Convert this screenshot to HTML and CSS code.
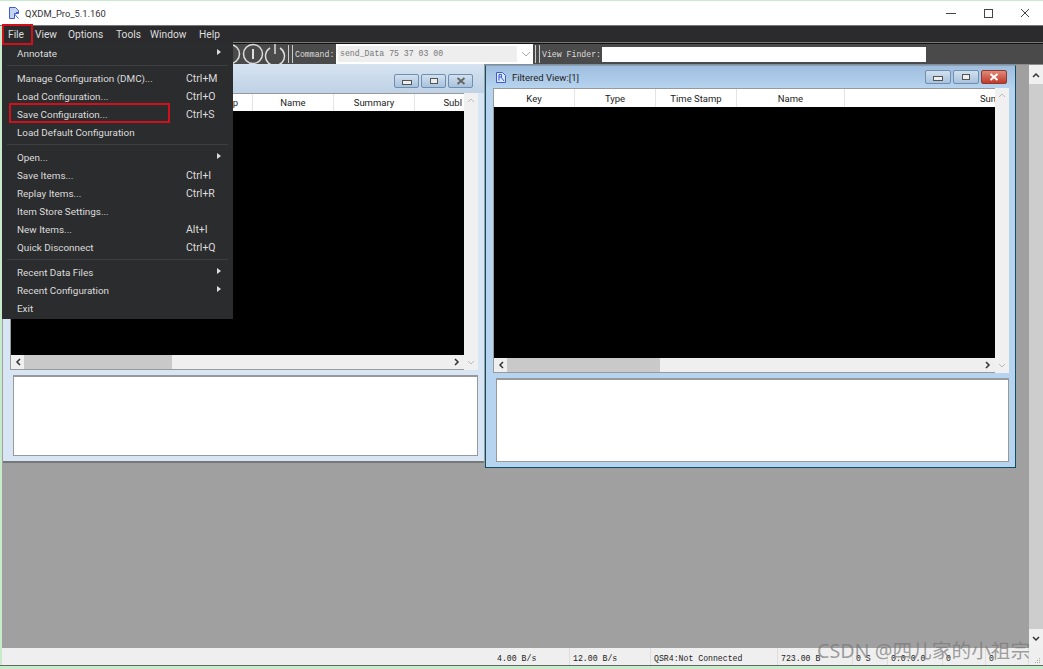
FILE: index.html
```html
<!DOCTYPE html>
<html lang="en">
<head>
  <meta charset="UTF-8" />
  <title>QXDM_Pro_5.1.160</title>
  <link rel="stylesheet" href="styles.css">
</head>
<body>
  <div class="app">
    <div class="titlebar">
      <svg class="app-icon" viewBox="0 0 12 12" width="12" height="12"><path d="M1.5 .5h6l3 3v3H6.5v5h-5z" fill="#c6d4f4" stroke="#3f5fc8"/><path d="M6.5 7l4 4.5M8 5.5h2.5" stroke="#3f5fc8" fill="none"/></svg>
      <span class="app-name">QXDM_Pro_5.1.160</span>
      <div class="caption">
        <svg viewBox="0 0 10 10" width="10" height="10"><path d="M0 5.5h10" stroke="#444"/></svg>
        <svg viewBox="0 0 10 10" width="10" height="10"><rect x="1.5" y="1.5" width="8" height="8" fill="none" stroke="#444"/></svg>
        <svg viewBox="0 0 10 10" width="10" height="10"><path d="M1 1l8 8M9 1l-8 8" stroke="#444"/></svg>
      </div>
    </div>

    <nav class="menubar">
      <a>File</a><a>View</a><a>Options</a><a>Tools</a><a>Window</a><a>Help</a>
    </nav>

    <div class="toolbar">
      <svg class="power" viewBox="0 0 66 22" width="66" height="22">
        <circle cx="10" cy="11" r="9.5" fill="none" stroke="#ddd" stroke-width="1.5"/>
        <circle cx="33" cy="11" r="9.5" fill="none" stroke="#ddd" stroke-width="1.5"/>
        <path d="M33 6v10" stroke="#ddd" stroke-width="2"/>
        <path d="M50 5a9.5 9.5 0 1 0 10 0" fill="none" stroke="#ddd" stroke-width="1.5"/>
        <path d="M55 1v10" stroke="#ddd" stroke-width="1.5"/>
      </svg>
      <i class="grip"></i>
      <span class="tool-label">Command:</span>
      <div class="combo">
        <span class="combo-text">send_Data 75 37 03 00</span>
        <svg viewBox="0 0 10 6" width="10" height="6"><path d="M1 1l4 4 4-4" fill="none" stroke="#aaa"/></svg>
      </div>
      <i class="grip"></i>
      <span class="tool-label finder">View Finder:</span>
      <div class="finder-input"></div>
    </div>

    <main class="desktop">
      <section class="win win-back">
        <header class="win-title">
          <div class="win-btns">
            <button><i class="glyph-min"></i></button>
            <button><i class="glyph-max"></i></button>
            <button><svg viewBox="0 0 10 8" width="10" height="8"><path d="M1.5 1l7 6M8.5 1l-7 6" stroke="#666" stroke-width="2"/></svg></button>
          </div>
        </header>
        <div class="list">
          <div class="list-main">
            <div class="list-head">
              <span class="col col-a">Time Stamp</span>
              <span class="col col-b">Name</span>
              <span class="col col-b">Summary</span>
              <span class="col col-clip">Subl</span>
            </div>
            <div class="list-body"></div>
            <div class="hscroll">
              <svg viewBox="0 0 6 8" width="6" height="8"><path d="M5 1L2 4l3 3" fill="none" stroke="#333" stroke-width="1.5"/></svg>
              <div class="track"><div class="thumb thumb-back"></div></div>
              <svg viewBox="0 0 6 8" width="6" height="8"><path d="M1 1l3 3-3 3" fill="none" stroke="#333" stroke-width="1.5"/></svg>
            </div>
          </div>
          <div class="vscroll">
            <svg viewBox="0 0 8 6" width="8" height="6"><path d="M1 5l3-3 3 3" fill="none" stroke="#bbb"/></svg>
            <svg viewBox="0 0 8 6" width="8" height="6"><path d="M1 1l3 3 3-3" fill="none" stroke="#bbb"/></svg>
          </div>
        </div>
        <div class="detail"></div>
      </section>

      <section class="win win-front">
        <header class="win-title">
          <svg class="win-icon" viewBox="0 0 12 13" width="12" height="13"><path d="M1.5 1.5h6l3 3v7h-9z" fill="#dbe5fb" stroke="#3f5fc8"/><path d="M4 3.5v6M4 3.5h2.5v2.5H4M6 6l3 4" fill="none" stroke="#3f5fc8"/></svg>
          <span class="win-name">Filtered View:[1]</span>
          <div class="win-btns">
            <button><i class="glyph-min"></i></button>
            <button><i class="glyph-max"></i></button>
            <button class="btn-close"><svg viewBox="0 0 10 8" width="10" height="8"><path d="M1.5 1l7 6M8.5 1l-7 6" stroke="#fff" stroke-width="2"/></svg></button>
          </div>
        </header>
        <div class="list">
          <div class="list-main">
            <div class="list-head">
              <span class="col col-b">Key</span>
              <span class="col col-b">Type</span>
              <span class="col col-b">Time Stamp</span>
              <span class="col col-name">Name</span>
              <span class="col col-sum">Sun</span>
            </div>
            <div class="list-body"></div>
            <div class="hscroll">
              <svg viewBox="0 0 6 8" width="6" height="8"><path d="M5 1L2 4l3 3" fill="none" stroke="#333" stroke-width="1.5"/></svg>
              <div class="track"><div class="thumb thumb-front"></div></div>
              <svg viewBox="0 0 6 8" width="6" height="8"><path d="M1 1l3 3-3 3" fill="none" stroke="#333" stroke-width="1.5"/></svg>
            </div>
          </div>
          <div class="vscroll">
            <svg viewBox="0 0 8 6" width="8" height="6"><path d="M1 5l3-3 3 3" fill="none" stroke="#bbb"/></svg>
            <svg viewBox="0 0 8 6" width="8" height="6"><path d="M1 1l3 3 3-3" fill="none" stroke="#bbb"/></svg>
          </div>
        </div>
        <div class="detail"></div>
      </section>

      <div class="desk-scroll">
        <div class="desk-arrow"><svg viewBox="0 0 8 6" width="8" height="6"><path d="M1 5l3-3 3 3" fill="none" stroke="#333" stroke-width="1.5"/></svg></div>
        <div class="desk-arrow"><svg viewBox="0 0 8 6" width="8" height="6"><path d="M1 1l3 3 3-3" fill="none" stroke="#333" stroke-width="1.5"/></svg></div>
      </div>
    </main>

    <footer class="statusbar">
      <span class="cell cell-rate1">4.00 B/s</span>
      <span class="cell cell-rate2">12.00 B/s</span>
      <span class="cell cell-qsr">QSR4:Not Connected</span>
      <span class="cell cell-bytes">723.00 B</span>
      <span class="cell cell-s">0 S</span>
      <span class="cell cell-ver">0.0.0.0</span>
      <span class="cell cell-n">0</span>
      <span class="cell cell-n">0</span>
      <svg class="size-grip" viewBox="0 0 6 6" width="6" height="6"><path d="M4 1h1v1H4zM2 3h1v1H2zM4 3h1v1H4zM0 5h1v1H0zM2 5h1v1H2zM4 5h1v1H4z" fill="#aaa"/></svg>
    </footer>

    <div class="menu">
      <div class="item"><span>Annotate</span><b></b><i class="arrow"></i></div>
      <hr>
      <div class="item"><span>Manage Configuration (DMC)...</span><b>Ctrl+M</b></div>
      <div class="item"><span>Load Configuration...</span><b>Ctrl+O</b></div>
      <div class="item"><span>Save Configuration...</span><b>Ctrl+S</b></div>
      <div class="item"><span>Load Default Configuration</span></div>
      <hr>
      <div class="item"><span>Open...</span><b></b><i class="arrow"></i></div>
      <div class="item"><span>Save Items...</span><b>Ctrl+I</b></div>
      <div class="item"><span>Replay Items...</span><b>Ctrl+R</b></div>
      <div class="item"><span>Item Store Settings...</span></div>
      <div class="item"><span>New Items...</span><b>Alt+I</b></div>
      <div class="item"><span>Quick Disconnect</span><b>Ctrl+Q</b></div>
      <hr>
      <div class="item"><span>Recent Data Files</span><b></b><i class="arrow"></i></div>
      <div class="item"><span>Recent Configuration</span><b></b><i class="arrow"></i></div>
      <div class="item"><span>Exit</span></div>
    </div>

    <div class="mark mark-file"></div>
    <div class="mark mark-save"></div>
    <div class="watermark">CSDN @四儿家的小祖宗</div>
  </div>
</body>
</html>
```
FILE: styles.css
```css
html, body {
  margin: 0;
  height: 100%;
  overflow: hidden;
}
body {
  background: #c8ebcb;
  font-family: 'Roboto', sans-serif;
  font-size: 9.5px;
  color: #222;
}
.app {
  position: relative;
  width: 1043px;
  height: 666px;
  padding-top: 1px;
  box-sizing: border-box;
  display: flex;
  flex-direction: column;
  border-bottom: 1px solid #666;
}

/* title bar */
.titlebar {
  height: 24px;
  flex: none;
  background: #fff;
  display: flex;
  align-items: center;
  padding-left: 8px;
  border-bottom: 1px solid #777;
}
.app-icon {
  margin-right: 5px;
}
.app-name {
  font-size: 9.4px;
  color: #333;
}
.caption {
  margin-left: auto;
  margin-right: 13px;
  display: flex;
  gap: 27px;
}

/* menu */
.menubar {
  height: 16px;
  flex: none;
  margin-left: 2px;
  background: #2b2b2d;
  display: flex;
  align-items: center;
  color: #ddd;
  font-size: 10.2px;
  padding-left: 6px;
  border-bottom: 1px solid #777;
}
.menubar a:nth-child(1) { width: 27px; }
.menubar a:nth-child(2) { width: 33px; }
.menubar a:nth-child(3) { width: 48px; }
.menubar a:nth-child(4) { width: 34px; }
.menubar a:nth-child(5) { width: 49px; }

.toolbar {
  height: 20px;
  flex: none;
  margin-left: 2px;
  background: #4a4a4a;
  border-top: 1px solid #111;
  display: flex;
  align-items: center;
  padding-left: 218px;
  font-family: 'Liberation Mono', monospace;
  font-size: 8.2px;
  color: #ddd;
}
.power {
  flex: none;
}
.grip {
  width: 3px;
  height: 18px;
  flex: none;
  margin: 0 2px;
  border-left: 1px solid #ccc;
  border-right: 1px solid #ccc;
}
.tool-label {
  width: 41px;
  flex: none;
  white-space: nowrap;
}
.tool-label.finder {
  width: 60px;
}
.combo {
  width: 197px;
  height: 20px;
  flex: none;
  box-sizing: border-box;
  background: #fff;
  padding: 2px 0 2px 2px;
  display: flex;
  align-items: center;
}
.combo-text {
  width: 179px;
  height: 100%;
  background: #eee;
  color: #777;
  padding-left: 2px;
  box-sizing: border-box;
  line-height: 16px;
}
.combo svg {
  margin-left: 4px;
}
.finder-input {
  width: 324px;
  height: 15px;
  flex: none;
  background: #fff;
}

/* desktop area, windows float on it */
.desktop {
  position: relative;
  flex: 1;
  margin-left: 2px;
  background: #a0a0a0;
  border-top: 1px solid #8c8c8c;
}
.desk-scroll {
  position: absolute;
  right: 0;
  top: 0;
  bottom: 0;
  width: 14px;
  background: #cdcdcd;
  display: flex;
  flex-direction: column;
  justify-content: space-between;
}
.desk-arrow {
  height: 19px;
  background: #f0f0f0;
  display: flex;
  align-items: center;
  justify-content: center;
}

.win {
  position: absolute;
  box-sizing: border-box;
  display: flex;
  flex-direction: column;
}
.win-title {
  box-sizing: border-box;
  display: flex;
  align-items: center;
  flex: none;
}
.win-back {
  left: 1px;
  top: -1px;
  width: 481px;
  height: 399px;
  background: #d8e5f4;
  border-bottom: 2px solid #777;
  padding: 0 6px 6px 7px;
}
.win-back .win-title {
  height: 29px;
  background: linear-gradient(#d6e3f1, #bfd2e6);
  margin: 0 -6px 0 -7px;
  padding: 5px 11px 0 7px;
}
.win-back .win-btns button {
  width: 25px;
}
.win-back .list {
  height: 277px;
}
.win-back .detail {
  margin: 5px 0 0 3px;
  height: 81px;
}
.win-front {
  left: 483px;
  top: 0;
  width: 531px;
  height: 403px;
  background: #b6d3ef;
  border: 1px solid #0f4f63;
  border-top-color: #7fa3c6;
  padding: 0 6px 5px 7px;
}
.win-front .win-title {
  height: 22px;
  background: linear-gradient(#9fbede, #b6d3ef);
  margin: 0 -6px 0 -7px;
  padding: 0 8px 0 9px;
}
.win-front .list {
  height: 285px;
}
.win-front .list-head {
  height: 18px;
}
.win-front .detail {
  margin: 5px 0 0 3px;
  height: 84px;
}
.win-icon {
  margin-right: 5px;
}
.win-name {
  color: #222;
}
.win-btns {
  margin-left: auto;
  display: flex;
  gap: 2px;
}
.win-btns button {
  width: 26px;
  height: 14px;
  padding: 0;
  border: 1px solid #6f8fb0;
  border-radius: 2px;
  background: linear-gradient(#d2e0ef, #a8c2dd);
  display: flex;
  align-items: center;
  justify-content: center;
}
.win-btns .btn-close {
  background: linear-gradient(#e08a78, #c0392b);
  border-color: #8c3b30;
}
.glyph-min {
  width: 8px;
  height: 3px;
  margin-top: 3px;
  background: #eee;
  border: 1px solid #555;
}
.glyph-max {
  width: 6px;
  height: 4px;
  background: #eee;
  border: 1px solid #555;
}

/* list with its scrollbars */
.list {
  display: flex;
  flex: none;
  background: #f0f0f0;
}
.list-main {
  flex: 1;
  min-width: 0;
  display: flex;
  flex-direction: column;
  border-bottom: 1px solid #999;
  border-left: 1px solid #999;
  border-top: 1px solid #999;
}
.list-head {
  height: 17px;
  flex: none;
  background: #fff;
  display: flex;
  overflow: hidden;
  color: #222;
}
.col {
  flex: none;
  height: 100%;
  display: flex;
  align-items: center;
  justify-content: center;
  box-sizing: border-box;
  border-right: 1px solid #e4e4e4;
  overflow: hidden;
}
.col-a { width: 242px; justify-content: flex-end; padding-right: 14px; }
.col-b { width: 81px; }
.col-clip { width: 47px; justify-content: flex-end; border: none; white-space: nowrap; }
.col-name { width: 108px; }
.col-sum { width: 151px; justify-content: flex-end; border: none; }
.list-body {
  flex: 1;
  background: #000;
}
.hscroll {
  height: 14px;
  flex: none;
  background: #efefef;
  display: flex;
  align-items: center;
  padding: 0 4px;
  gap: 3px;
}
.track {
  flex: 1;
  height: 100%;
}
.thumb {
  height: 100%;
  background: #c9c9c9;
}
.thumb-back { width: 148px; }
.thumb-front { width: 153px; }
.vscroll {
  width: 14px;
  flex: none;
  display: flex;
  flex-direction: column;
  justify-content: space-between;
  align-items: center;
  padding: 4px 0;
  box-sizing: border-box;
}
.detail {
  flex: none;
  background: #fff;
  border: 1px solid #999;
  border-top-width: 2px;
  box-sizing: border-box;
}

/* status bar */
.statusbar {
  height: 17px;
  flex: none;
  box-sizing: border-box;
  margin-left: 2px;
  background: #efefef;
  display: flex;
  padding: 0 0 0 492px;
  font-family: 'Liberation Mono', monospace;
  font-size: 8.2px;
  color: #222;
  align-items: stretch;
}
.cell {
  flex: none;
  box-sizing: border-box;
  padding: 6px 0 0 3px;
  white-space: nowrap;
  border-right: 1px solid #dedede;
}
.cell-rate1 { width: 76px; }
.cell-rate2 { width: 81px; }
.cell-qsr { width: 127px; }
.cell-bytes { width: 75px; }
.cell-s { width: 35px; }
.cell-ver { width: 55px; }
.cell-n { width: 43px; }
.size-grip {
  margin: auto 2px 2px auto;
}

/* open File menu */
.menu {
  position: absolute;
  left: 2px;
  top: 42px;
  width: 231px;
  height: 277px;
  box-sizing: border-box;
  padding-top: 2px;
  background: #2b2c2e;
  color: #dcdcdc;
  font-size: 9.9px;
}
.item {
  height: 18px;
  display: grid;
  grid-template-columns: 169px 31px 8px;
  align-items: center;
  padding-left: 15px;
}
.item b {
  font-weight: normal;
  font-size: 10.5px;
}
.arrow {
  width: 0;
  height: 0;
  border-left: 4px solid #ddd;
  border-top: 3px solid transparent;
  border-bottom: 3px solid transparent;
  margin-top: -2px;
}
.menu hr {
  margin: 3px 5px;
  height: 1px;
  border: 0;
  background: #3e3f41;
}

/* red callouts drawn on the screenshot */
.mark {
  position: absolute;
  border: 2px solid #d2101c;
  box-sizing: border-box;
}
.mark-file {
  left: 2px;
  top: 24px;
  width: 31px;
  height: 21px;
}
.mark-save {
  left: 9px;
  top: 103px;
  width: 161px;
  height: 20px;
}
.watermark {
  position: absolute;
  left: 817px;
  top: 635px;
  font-family: 'Noto Sans', 'Noto Sans CJK SC', sans-serif;
  font-size: 19.7px;
  color: rgba(120, 120, 120, 0.7);
  white-space: nowrap;
}
```
